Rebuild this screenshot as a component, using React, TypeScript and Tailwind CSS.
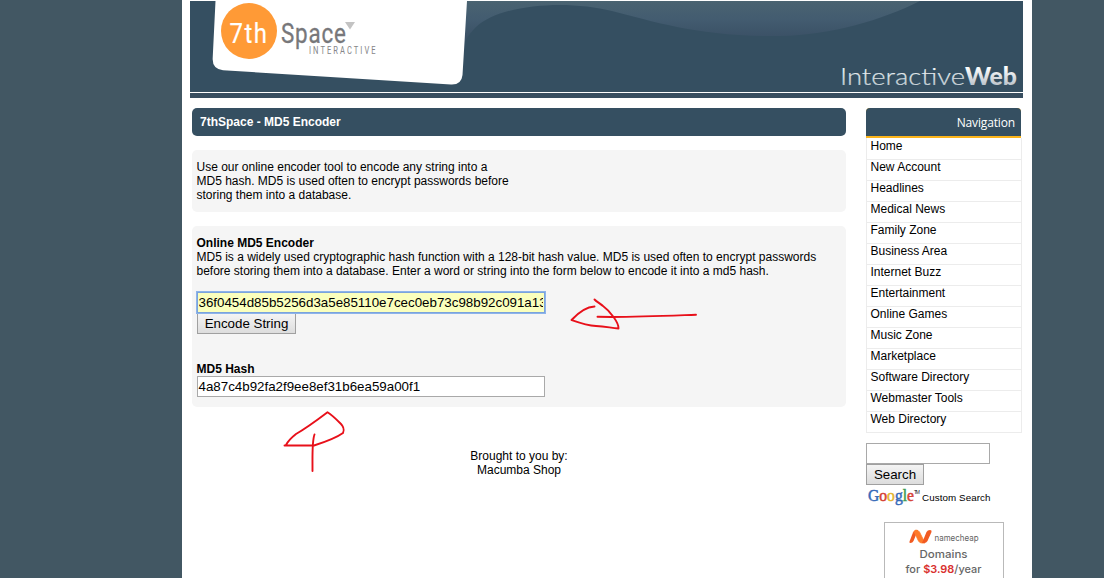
const links = [
  'Home',
  'New Account',
  'Headlines',
  'Medical News',
  'Family Zone',
  'Business Area',
  'Internet Buzz',
  'Entertainment',
  'Online Games',
  'Music Zone',
  'Marketplace',
  'Software Directory',
  'Webmaster Tools',
  'Web Directory',
];

function Banner() {
  return (
    <svg className="block h-[91px] w-[833px]" viewBox="190 1 833 91">
      <defs>
        <linearGradient id="swoosh" x1="0" y1="1" x2="0" y2="37" gradientUnits="userSpaceOnUse">
          <stop offset="0" stopColor="#4a6371" />
          <stop offset="0.5" stopColor="#435c70" />
          <stop offset="1" stopColor="#3b5166" />
        </linearGradient>
        <linearGradient id="silver" x1="0" y1="67" x2="0" y2="86" gradientUnits="userSpaceOnUse">
          <stop offset="0" stopColor="#ffffff" />
          <stop offset="1" stopColor="#b9c1c9" />
        </linearGradient>
      </defs>
      <rect x="190" y="1" width="833" height="91" fill="#354f61" />
      <path
        d="M460 1H920C882 20 832 35 780 36C700 37 656 22 612 11C570 0 502 3 476 27C470 33 465 40 463 46Z"
        fill="url(#swoosh)"
      />
      <path d="M215.500 1H467L462.500 75Q461.500 85 451 84.500L223 70.200Q212 69 212.700 58Z" fill="#fff" />
      <circle cx="249" cy="31" r="28" fill="#ff9a36" />
      <g transform="translate(229.500 43) scale(.84 1)">
        <text fontFamily="Roboto" fontSize="28.500" fill="#fff" stroke="#fff" strokeWidth=".2" textLength="44.500">
          7th
        </text>
      </g>
      <g transform="translate(281 43) scale(.8 1)">
        <text fontFamily="Roboto" fontSize="28" fill="#77777a" stroke="#77777a" strokeWidth=".3" textLength="81">
          Space
        </text>
      </g>
      <path d="M345 22H355L350 29.500Z" fill="#c3c3c3" />
      <g transform="translate(309 54) scale(.72 1)">
        <text fontFamily="Roboto" fontSize="10.500" fill="#858588" textLength="92.500" lengthAdjust="spacing">
          INTERACTIVE
        </text>
      </g>
      <text x="840" y="85" fontFamily="Lato" fontWeight="300" fontSize="24" fill="url(#silver)" stroke="#dfe4e8" strokeWidth=".2" textLength="125" lengthAdjust="spacingAndGlyphs">
        Interactive
      </text>
      <text x="965" y="85" fontFamily="Lato" fontWeight="900" fontSize="24" fill="url(#silver)" textLength="52" lengthAdjust="spacingAndGlyphs">
        Web
      </text>
    </svg>
  );
}

function Annotations() {
  return (
    <svg
      className="pointer-events-none absolute left-0 top-0 h-[578px] w-[1104px]"
      viewBox="0 0 1104 578"
      fill="none"
      stroke="#e8101a"
      strokeWidth="1.900"
      strokeLinecap="round"
      strokeLinejoin="round"
    >
      <path d="M594.500 306.500C585 307 578 313 571.500 320C580 323 587 325.500 596 326C606 326.500 611 328 618.500 328.500C619 323 610 311 603 306C601 304 597 302 594.500 299.500" />
      <path d="M597.500 316.800C630 317.500 662 316 696 314.700" />
      <path d="M284.500 445.500H314C325 442 336 438 343 433C345 429 342 425 341 424C336 419 332 415 327.500 412.300C316 421 305 429 296 434C291 438 288 441 286 445" />
      <path d="M314.500 434.500C312 441 312.500 449 312.500 471" />
    </svg>
  );
}

const buttonClass =
  'box-border block h-[21px] border border-[#a0a0a0] bg-linear-to-b from-[#f4f4f4] to-[#dddddd] text-center text-[13.333px] leading-[19px] whitespace-nowrap';

function Sidebar() {
  return (
    <aside className="mt-[10px] w-[156px]">
      <div className="w-[155px] bg-[#fbb41a] pb-[2px] rounded-t-[4px]">
        <div className="h-[28px] rounded-t-[4px] bg-[#354f61] pr-[6px] text-right font-['Open_Sans',sans-serif] text-[12px] font-medium leading-[29px] tracking-[-0.150px] text-white">
          Navigation
        </div>
      </div>
      <nav className="border-x border-[#ececec] pt-px">
        {links.map((l) => (
          <a key={l} className="block h-[21px] border-b border-[#ececec] pl-[3.500px] leading-[14px]">
            {l}
          </a>
        ))}
      </nav>
      <input aria-label="Search terms" className="mt-[10px] block h-[21px] w-[124px] border border-[#a9a9a9] bg-white px-px" />
      <button className={`${buttonClass} w-[58px]`}>Search</button>
      <div className="flex h-[24px] items-center pl-[2px]">
        <svg className="h-[22px] w-[54px]" viewBox="0 0 54 22" fontFamily="Liberation Serif" fontSize="16.500" strokeWidth=".5">
          <text y="15" textLength="46" lengthAdjust="spacingAndGlyphs">
            <tspan fill="#3569b8" stroke="#3569b8">G</tspan>
            <tspan fill="#d64235" stroke="#d64235">o</tspan>
            <tspan fill="#e5b52d" stroke="#e5b52d">o</tspan>
            <tspan fill="#3569b8" stroke="#3569b8">g</tspan>
            <tspan fill="#3c9b50" stroke="#3c9b50">l</tspan>
            <tspan fill="#d64235" stroke="#d64235">e</tspan>
          </text>
          <text x="46" y="7.500" fontFamily="Liberation Sans" fontSize="5" fill="#222" stroke="none" textLength="6">
            TM
          </text>
        </svg>
        <svg className="h-[22px] w-[70px]" viewBox="0 0 70 22">
          <text x="0" y="14.500" fontFamily="Liberation Sans" fontSize="9.800" fill="#000" textLength="68.500">
            Custom Search
          </text>
        </svg>
      </div>
      <div className="ml-[18px] mt-[13px] h-[70px] w-[120px] border border-[#b9b9b9] bg-white pt-[6px]">
        <svg className="block h-[60px] w-[118px]" viewBox="885 529 118 60">
          <path d="M909.500 541.500L913 532.500Q914 530 917 530H918L913.500 541Q912.500 543 910.500 543Q909 543 909.500 541.500Z" fill="#f15a22" />
          <path d="M915.500 530Q918.500 530 919.500 532L925 543H922Q919.500 543 918.500 541L914 531.500Z" fill="#ff7a2a" stroke="#ff7a2a" strokeWidth=".8" />
          <path d="M922 543L926.500 532Q927.500 530 930 530Q932 530 931.500 532L927.500 541Q926.500 543 924 543Z" fill="#f15a22" />
          <text x="934.500" y="541" fontFamily="Inter" fontSize="8.500" fill="#626262" textLength="44" lengthAdjust="spacingAndGlyphs">
            namecheap
          </text>
          <text x="919.500" y="558" fontFamily="Inter" fontWeight="500" fontSize="11" fill="#666" textLength="48" lengthAdjust="spacingAndGlyphs">
            Domains
          </text>
          <text x="905.500" y="573" fontFamily="Inter" fontWeight="500" fontSize="11" fill="#666" textLength="76" lengthAdjust="spacingAndGlyphs">
            for <tspan fill="#d9302e" fontWeight="600">$3.98</tspan>/year
          </text>
        </svg>
      </div>
    </aside>
  );
}

export default function App() {
  return (
    <div className="relative flex h-[578px] w-[1104px] justify-center overflow-hidden bg-[#425763] font-['Liberation_Sans',Arial,sans-serif] text-[12px] leading-[14px] text-black">
      <div className="ml-[110px] h-[578px] w-[850px] shrink-0 bg-white px-[8px] pt-px">
        <header className="w-[833px] border-b-[5px] border-[#384e60]">
          <Banner />
          <div className="h-px bg-white" />
        </header>
        <div className="flex justify-between pl-[2px] pr-[2px]">
          <main className="mt-[10px] w-[654px]">
            <h1 className="h-[28px] rounded-[5px] bg-[#354f61] pl-[8px] font-bold leading-[28px] text-white">
              7thSpace - MD5 Encoder
            </h1>
            <section className="mt-[14px] h-[62px] rounded-[5px] bg-[#f5f5f5] pl-[4.500px] pt-[10px]">
              <p className="whitespace-nowrap">
                Use our online encoder tool to encode any string into a<br />
                MD5 hash. MD5 is used often to encrypt passwords before
                <br />
                storing them into a database.
              </p>
            </section>
            <section className="mt-[14px] h-[181px] rounded-[5px] bg-[#f5f5f5] pl-[5px] pt-[10px]">
              <h2 className="-ml-[0.500px] font-bold">Online MD5 Encoder</h2>
              <p className="-ml-[0.500px] whitespace-nowrap">
                MD5 is a widely used cryptographic hash function with a 128-bit hash value. MD5 is used often to encrypt passwords
                <br />
                before storing them into a database. Enter a word or string into the form below to encode it into a md5 hash.
              </p>
              <div className="mt-[14px] h-[21px] w-[348px] overflow-hidden border border-[#7ba3dc] bg-[#faffbd] px-[0.500px] text-[13.333px] leading-[19px] whitespace-nowrap outline-1 outline-[#8db4ea]">
                <div className="w-[344px] overflow-hidden">36f0454d85b5256d3a5e85110e7cec0eb73c98b92c091a13</div>
              </div>
              <button className={`${buttonClass} w-[99px]`}>Encode String</button>
              <h2 className="-ml-[0.500px] mt-[28px] font-bold">MD5 Hash</h2>
              <div className="h-[21px] w-[348px] border border-[#a9a9a9] bg-white px-[0.500px] text-[13.333px] leading-[19px]">
                4a87c4b92fa2f9ee8ef31b6ea59a00f1
              </div>
            </section>
            <footer className="mt-[42px] text-center">
              Brought to you by:
              <br />
              Macumba Shop
            </footer>
          </main>
          <Sidebar />
        </div>
      </div>
      <Annotations />
    </div>
  );
}
